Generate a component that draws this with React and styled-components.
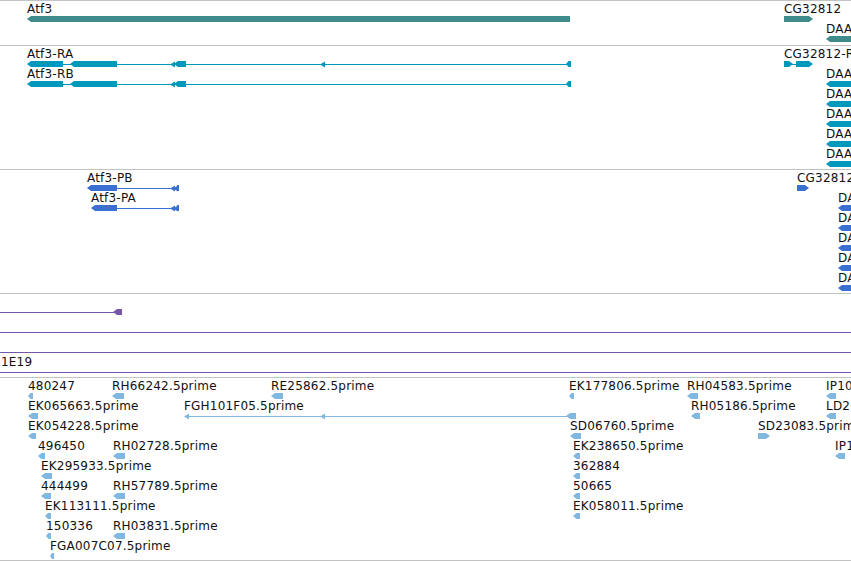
import React from 'react';
import styled, { createGlobalStyle } from 'styled-components';

// colours of the feature glyphs, one per track
const GENE = '#408c8d';
const TRANSCRIPT = '#0099bb';
const PROTEIN = '#3a70d2';
const CLONE = '#7457a6';
const EST = '#80b8e0';

const ROW = 20;
const LABEL_TOP = 1;
const GLYPH_TOP = 15;
const GLYPH_H = 6;
const WIDTH = 851;

const GlobalStyle = createGlobalStyle`
  html, body {
    margin: 0;
    padding: 0;
    background: #fff;
    overflow: hidden;
  }
  body {
    font-family: "DejaVu Sans", "Liberation Sans", sans-serif;
  }
`;

const Browser = styled.div`
  display: flex;
  flex-direction: column;
  width: ${WIDTH}px;
  height: 561px;
  overflow: hidden;
  background: #fff;
`;

const Track = styled.section`
  position: relative;
  flex: none;
  height: ${(p) => p.$height}px;
  border-top: 1px solid #c2c2c2;
  border-bottom: ${(p) => (p.$last ? '1px solid #c2c2c2' : 'none')};
  overflow: hidden;
`;

const Canvas = styled.svg`
  position: absolute;
  left: 0;
  top: 0;
  display: block;
`;

const Label = styled.span`
  position: absolute;
  font-size: 12px;
  line-height: 14px;
  letter-spacing: 0.2px;
  color: #111;
  white-space: nowrap;
`;

const block = (from, to, dir = 'left') => ({ t: 'block', from, to, dir });
const line = (from, to) => ({ t: 'line', from, to });
const tick = (at) => ({ t: 'tick', at });

const atf3Tx = (row, withMidArrow) => ({
  label: `Atf3-R${row === 0 ? 'A' : 'B'}`,
  x: 27,
  row,
  parts: [
    line(63, 568),
    block(27, 63),
    block(70, 117),
    tick(170),
    block(174, 186),
    ...(withMidArrow ? [tick(320)] : []),
    block(566, 571),
  ],
});

const atf3Prot = (label, x, row) => ({
  label,
  x,
  row,
  parts: [line(117, 178), block(x, 117), tick(170), tick(173), block(177, 179, 'none')],
});

const daam = (suffix, x, rows) =>
  rows.map((row, i) => ({
    label: `DAAM-${suffix}${'ABCDE'[i]}`,
    x,
    row,
    parts: [block(x, WIDTH + 40)],
  }));

const est = (label, x, row, len, dir = 'left') => ({
  label,
  x,
  row,
  parts: [block(x, x + len, dir)],
});

const TRACKS = [
  {
    name: 'gene',
    color: GENE,
    height: 44,
    features: [
      { label: 'Atf3', x: 27, row: 0, parts: [block(27, 570)] },
      { label: 'CG32812', x: 784, row: 0, parts: [block(784, 813, 'right')] },
      { label: 'DAAM', x: 826, row: 1, parts: [block(826, WIDTH + 40)] },
    ],
  },
  {
    name: 'transcript',
    color: TRANSCRIPT,
    height: 123,
    features: [
      atf3Tx(0, true),
      atf3Tx(1, false),
      {
        label: 'CG32812-RA',
        x: 784,
        row: 0,
        parts: [line(792, 797), block(784, 793, 'right'), block(796, 813, 'right')],
      },
      ...daam('R', 826, [1, 2, 3, 4, 5]),
    ],
  },
  {
    name: 'protein',
    color: PROTEIN,
    height: 123,
    features: [
      atf3Prot('Atf3-PB', 87, 0),
      atf3Prot('Atf3-PA', 91, 1),
      { label: 'CG32812-PA', x: 797, row: 0, parts: [block(797, 809, 'right')] },
      ...daam('P', 838, [1, 2, 3, 4, 5]),
    ],
  },
  {
    name: 'clone',
    color: CLONE,
    height: 83,
    features: [
      { label: '', x: 0, row: 0, parts: [line(-10, 115), block(113, 122)] },
      { label: '', x: 0, row: 1, parts: [line(-10, WIDTH + 10)] },
      { label: '', x: 0, row: 2, parts: [line(-10, WIDTH + 10)] },
      { label: '1E19', x: 1, row: 3, parts: [line(-10, WIDTH + 10)] },
    ],
  },
  {
    name: 'est',
    color: EST,
    height: 182,
    last: true,
    features: [
      est('480247', 28, 0, 5),
      est('RH66242.5prime', 112, 0, 12),
      est('RE25862.5prime', 271, 0, 12),
      est('EK177806.5prime', 569, 0, 5),
      est('RH04583.5prime', 687, 0, 11),
      est('IP10413.5prime', 826, 0, 10),

      est('EK065663.5prime', 28, 1, 10),
      {
        label: 'FGH101F05.5prime',
        x: 184,
        row: 1,
        parts: [line(186, 570), tick(184), tick(320), block(566, 576)],
      },
      est('RH05186.5prime', 691, 1, 9),
      est('LD26712.5prime', 826, 1, 10),

      est('EK054228.5prime', 28, 2, 8),
      est('SD06760.5prime', 570, 2, 11),
      est('SD23083.5prime', 758, 2, 12, 'right'),

      est('496450', 38, 3, 7),
      est('RH02728.5prime', 113, 3, 12),
      est('EK238650.5prime', 573, 3, 7),
      est('IP12205.5prime', 835, 3, 10),

      est('EK295933.5prime', 41, 4, 11),
      est('362884', 573, 4, 7),

      est('444499', 41, 5, 10),
      est('RH57789.5prime', 113, 5, 12),
      est('50665', 573, 5, 7),

      est('EK113111.5prime', 45, 6, 6),
      est('EK058011.5prime', 573, 6, 7),

      est('150336', 46, 7, 5),
      est('RH03831.5prime', 113, 7, 12),

      est('FGA007C07.5prime', 50, 8, 4),
    ],
  },
];

function Part({ part, row, color }) {
  const top = GLYPH_TOP + row * ROW;
  const mid = top + GLYPH_H / 2;
  const bottom = top + GLYPH_H;
  if (part.t === 'line') {
    return (
      <line
        x1={part.from}
        x2={part.to}
        y1={mid + 0.5}
        y2={mid + 0.5}
        stroke={color}
        strokeWidth={1}
        shapeRendering="crispEdges"
      />
    );
  }
  if (part.t === 'tick') {
    // strand arrow sitting on an intron line
    const x = part.at;
    return (
      <polygon
        points={`${x},${mid + 0.5} ${x + 5},${top + 0.5} ${x + 5},${bottom + 0.5}`}
        fill={color}
      />
    );
  }
  const { from, to, dir } = part;
  const tip = Math.min(4, (to - from) / 2);
  let points;
  if (dir === 'left') {
    points = `${from},${mid} ${from + tip},${top} ${to},${top} ${to},${bottom} ${from + tip},${bottom}`;
  } else if (dir === 'right') {
    points = `${from},${top} ${to - tip},${top} ${to},${mid} ${to - tip},${bottom} ${from},${bottom}`;
  } else {
    points = `${from},${top} ${to},${top} ${to},${bottom} ${from},${bottom}`;
  }
  return <polygon points={points} fill={color} />;
}

function FeatureTrack({ track }) {
  return (
    <Track $height={track.height} $last={track.last} data-track={track.name}>
      <Canvas width={WIDTH} height={track.height} viewBox={`0 0 ${WIDTH} ${track.height}`}>
        {track.features.map((f, i) => (
          <g key={i}>
            {f.parts.map((p, j) => (
              <Part key={j} part={p} row={f.row} color={track.color} />
            ))}
          </g>
        ))}
      </Canvas>
      {track.features
        .filter((f) => f.label)
        .map((f, i) => (
          <Label key={i} style={{ left: f.x, top: LABEL_TOP + f.row * ROW }}>
            {f.label}
          </Label>
        ))}
    </Track>
  );
}

export default function App() {
  return (
    <>
      <GlobalStyle />
      <Browser>
        {TRACKS.map((t) => (
          <FeatureTrack key={t.name} track={t} />
        ))}
      </Browser>
    </>
  );
}
